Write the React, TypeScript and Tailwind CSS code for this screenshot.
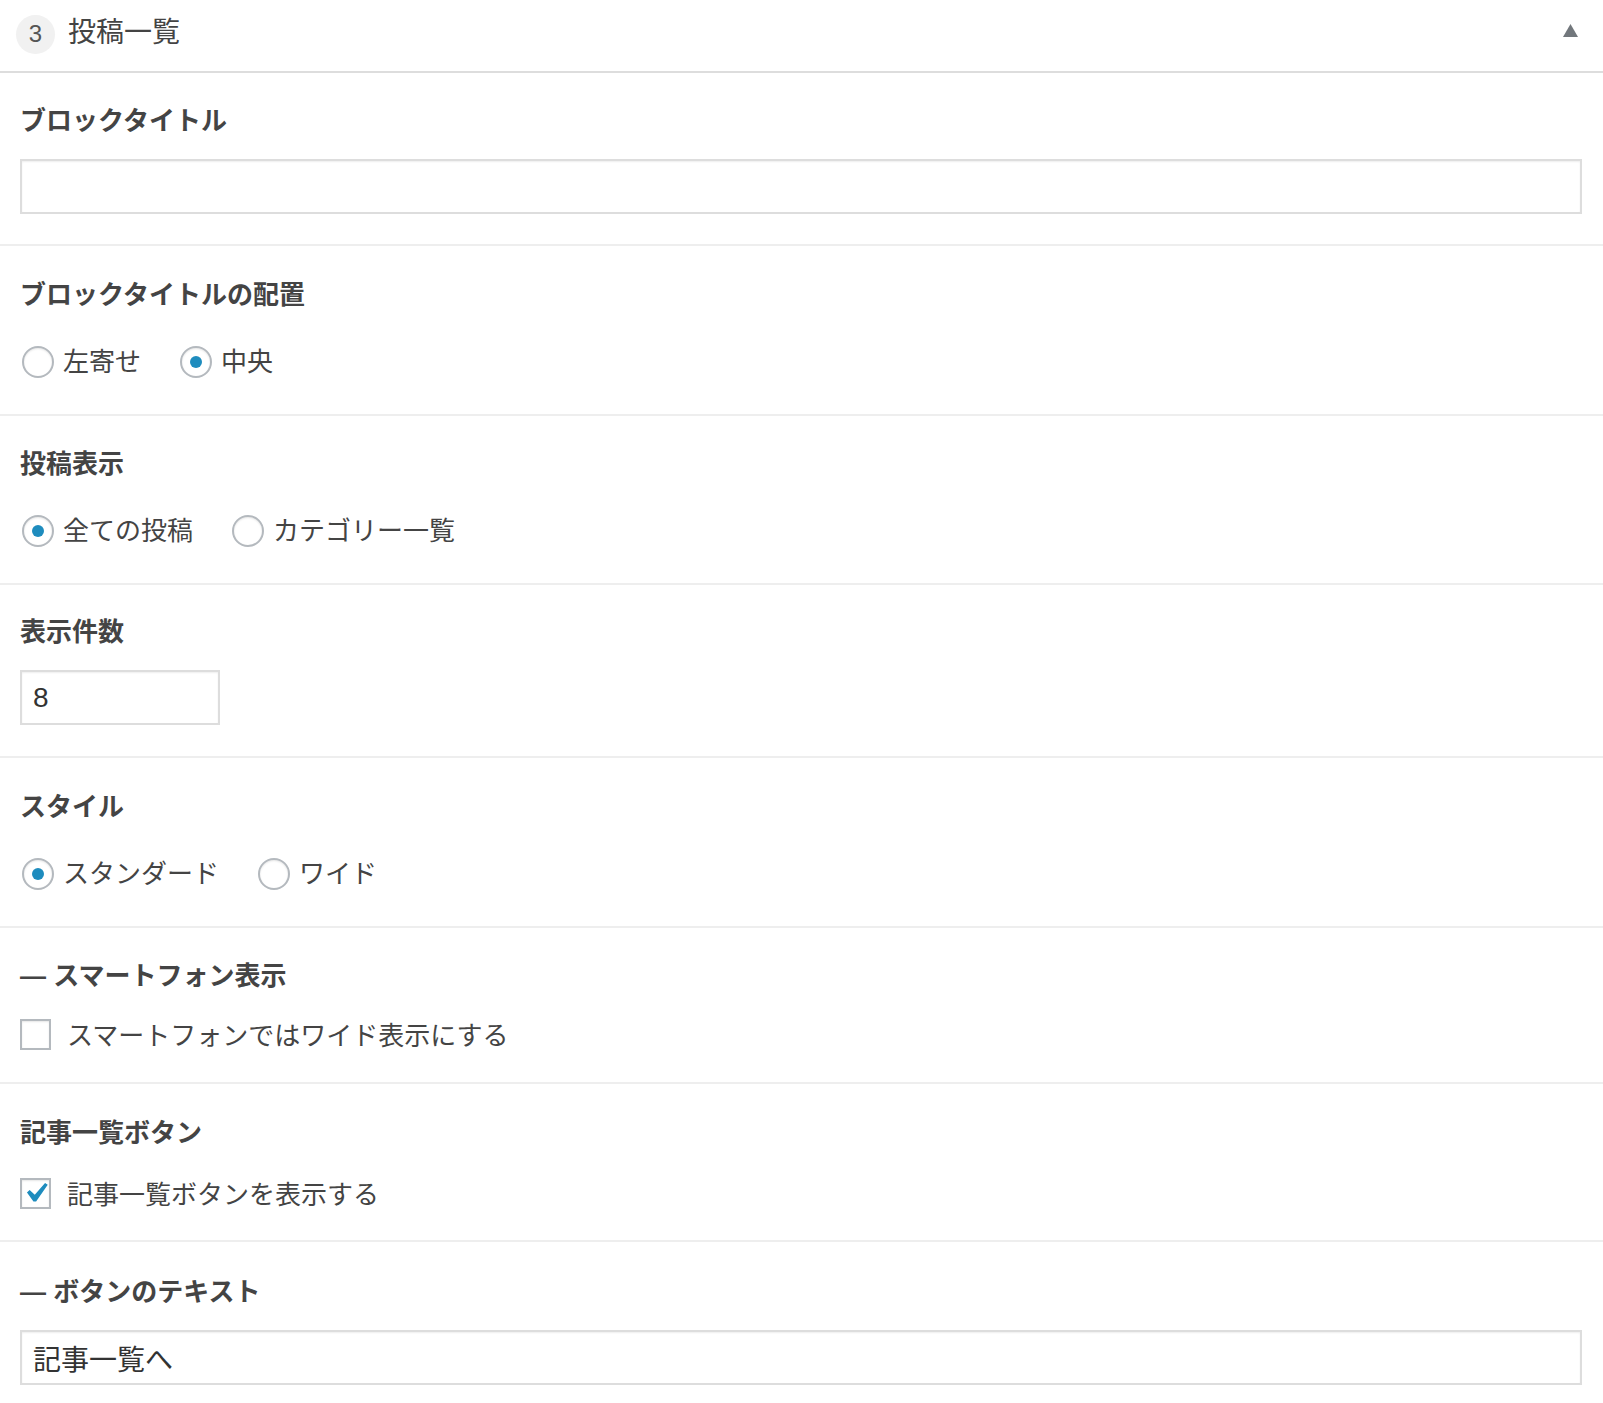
import { useState } from "react";

type Option = { value: string; label: string };

function Radio({ checked }: { checked: boolean }) {
  return (
    <span className="flex h-[32px] w-[32px] shrink-0 items-center justify-center rounded-full border-2 border-[#b4b9be] bg-white shadow-[inset_0_1px_2px_rgba(0,0,0,0.1)]">
      {checked && <span className="h-[12px] w-[12px] rounded-full bg-[#1e8cbe]" />}
    </span>
  );
}

function Checkbox({ checked }: { checked: boolean }) {
  return (
    <span className="flex h-[31px] w-[31px] shrink-0 items-center justify-center border-2 border-[#b4b9be] bg-white shadow-[inset_0_1px_2px_rgba(0,0,0,0.1)]">
      {checked && (
        <svg width="27" height="27" viewBox="3.3 3.4 13.5 13.5">
          <path d="M14.83 4.89l1.34.94-5.81 8.38H9.02L5.78 9.67l1.34-1.25 2.57 2.4z" fill="#1e8cbe" />
        </svg>
      )}
    </span>
  );
}

function Label({ children }: { children: React.ReactNode }) {
  return <div className="h-[36px] text-[26px] font-bold leading-[36px] text-[#444]">{children}</div>;
}

function Section({ children, className = "" }: { children: React.ReactNode; className?: string }) {
  return <section className={`border-b-2 border-[#eee] pl-5 pr-[21px] ${className}`}>{children}</section>;
}

function RadioGroup({ options, initial }: { options: Option[]; initial: string }) {
  const [value, setValue] = useState(initial);
  return (
    <div className="mt-[29px] flex h-[40px] items-center gap-[39px] pl-[2px]">
      {options.map((o) => (
        <button key={o.value} type="button" onClick={() => setValue(o.value)} className="flex items-center gap-[9px]">
          <Radio checked={value === o.value} />
          <span className="text-[26px] leading-[40px] text-[#444]">{o.label}</span>
        </button>
      ))}
    </div>
  );
}

function CheckRow({ label, initial }: { label: string; initial: boolean }) {
  const [on, setOn] = useState(initial);
  return (
    <button type="button" onClick={() => setOn(!on)} className="flex h-[40px] items-center gap-[16px]">
      <Checkbox checked={on} />
      <span className="pt-[3px] text-[26px] leading-[40px] text-[#444]">{label}</span>
    </button>
  );
}

function TextField({ value, className = "w-full" }: { value: string; className?: string }) {
  return (
    <input
      defaultValue={value}
      className={`mt-[20px] block h-[55px] border-2 border-[#ddd] bg-white px-[11px] text-[28px] text-[#333] shadow-[inset_0_1px_2px_rgba(0,0,0,0.07)] outline-none ${className}`}
    />
  );
}

export default function App() {
  return (
    <div className="min-h-[1403px] w-full bg-white font-['Liberation_Sans','Noto_Sans_CJK_JP',sans-serif]">
      <header className="flex h-[73px] items-center border-b-2 border-[#ddd] pb-[3px] pl-4 pr-[25px]">
        <span className="flex h-[39px] w-[39px] items-center justify-center rounded-full bg-[#f1f1f1] text-[24px] leading-none text-[#555]">
          3
        </span>
        <h1 className="mb-[2px] ml-[13px] text-[28px] leading-none text-[#444]">投稿一覧</h1>
        <svg className="mb-[7px] ml-auto" width="15" height="13" viewBox="0 0 15 13">
          <polygon points="7.5,0 15,13 0,13" fill="#72777c" />
        </svg>
      </header>

      <Section className="pb-[30px] pt-[30px]">
        <Label>ブロックタイトル</Label>
        <TextField value="" />
      </Section>

      <Section className="pb-[32px] pt-[31px]">
        <Label>ブロックタイトルの配置</Label>
        <RadioGroup
          initial="center"
          options={[
            { value: "left", label: "左寄せ" },
            { value: "center", label: "中央" },
          ]}
        />
      </Section>

      <Section className="pb-[32px] pt-[30px]">
        <Label>投稿表示</Label>
        <RadioGroup
          initial="all"
          options={[
            { value: "all", label: "全ての投稿" },
            { value: "cat", label: "カテゴリー一覧" },
          ]}
        />
      </Section>

      <Section className="pb-[31px] pt-[29px]">
        <Label>表示件数</Label>
        <TextField value="8" className="w-[200px]" />
      </Section>

      <Section className="pb-[32px] pt-[31px]">
        <Label>スタイル</Label>
        <RadioGroup
          initial="standard"
          options={[
            { value: "standard", label: "スタンダード" },
            { value: "wide", label: "ワイド" },
          ]}
        />
      </Section>

      <Section className="pb-[28px] pt-[30px]">
        <Label>― スマートフォン表示</Label>
        <div className="mt-[20px]">
          <CheckRow label="スマートフォンではワイド表示にする" initial={false} />
        </div>
      </Section>

      <Section className="pb-[27px] pt-[31px]">
        <Label>記事一覧ボタン</Label>
        <div className="mt-[22px]">
          <CheckRow label="記事一覧ボタンを表示する" initial={true} />
        </div>
      </Section>

      <section className="pl-5 pr-[21px] pt-[32px]">
        <Label>― ボタンのテキスト</Label>
        <TextField value="記事一覧へ" />
      </section>
    </div>
  );
}
